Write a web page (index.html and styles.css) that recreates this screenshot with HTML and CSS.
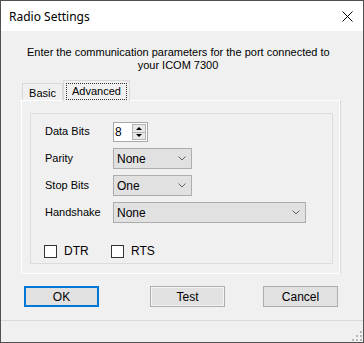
FILE: index.html
```html
<!DOCTYPE html>
<html lang="en">
<head>
    <meta charset="UTF-8">
    <title>Radio Settings</title>
    <link rel="stylesheet" href="styles.css">
</head>
<body>

    <div class="window">
        <div class="titlebar">
            <span class="title">Radio Settings</span>
            <svg class="close" width="11" height="11" viewBox="0 0 11 11">
                <path d="M0.5 0.5 L10.5 10.5 M10.5 0.5 L0.5 10.5" stroke="#000" stroke-width="1" fill="none"/>
            </svg>
        </div>

        <div class="intro">Enter the communication parameters for the port connected to<br>your ICOM 7300</div>

        <div class="tabs">
            <div class="tabstrip">
                <div class="tab">Basic</div>
                <div class="tab active"><span class="focus">Advanced</span></div>
            </div>
            <div class="tabpage">
                <div class="group">
                    <div class="row first">
                        <label class="field-label">Data Bits</label>
                        <div class="spinner">
                            <span class="spin-value">8</span>
                            <div class="spin-buttons">
                                <div class="spin-btn"><span class="arrow-up"></span></div>
                                <div class="spin-btn"><span class="arrow-down"></span></div>
                            </div>
                        </div>
                    </div>
                    <div class="row">
                        <label class="field-label">Parity</label>
                        <div class="combo">
                            <span>None</span>
                            <svg width="8" height="5" viewBox="0 0 8 5"><path d="M0.5 0.5 L4 4 L7.5 0.5" stroke="#606060" fill="none"/></svg>
                        </div>
                    </div>
                    <div class="row">
                        <label class="field-label">Stop Bits</label>
                        <div class="combo">
                            <span>One</span>
                            <svg width="8" height="5" viewBox="0 0 8 5"><path d="M0.5 0.5 L4 4 L7.5 0.5" stroke="#606060" fill="none"/></svg>
                        </div>
                    </div>
                    <div class="row">
                        <label class="field-label">Handshake</label>
                        <div class="combo wide">
                            <span>None</span>
                            <svg width="8" height="5" viewBox="0 0 8 5"><path d="M0.5 0.5 L4 4 L7.5 0.5" stroke="#606060" fill="none"/></svg>
                        </div>
                    </div>
                    <div class="checks">
                        <div class="check"><span class="box"></span>DTR</div>
                        <div class="check"><span class="box"></span>RTS</div>
                    </div>
                </div>
            </div>
        </div>

        <div class="buttons">
            <button class="btn default">OK</button>
            <button class="btn test">Test</button>
            <button class="btn cancel">Cancel</button>
        </div>

        <div class="footer">
            <svg class="grip" width="10" height="10" viewBox="0 0 10 10">
                <rect x="8" y="0" width="2" height="2" fill="#b8b8b8"/>
                <rect x="4" y="4" width="2" height="2" fill="#b8b8b8"/>
                <rect x="8" y="4" width="2" height="2" fill="#b8b8b8"/>
                <rect x="0" y="8" width="2" height="2" fill="#b8b8b8"/>
                <rect x="4" y="8" width="2" height="2" fill="#b8b8b8"/>
                <rect x="8" y="8" width="2" height="2" fill="#b8b8b8"/>
            </svg>
        </div>
    </div>

</body>
</html>
```

FILE: styles.css
```css
body {
    margin: 0;
    padding: 0;
    font-family: "Liberation Sans", Arial, sans-serif;
    font-size: 11px;
    color: #000;
    background-color: #ffffff;
}

.window {
    width: 364px;
    height: 343px;
    box-sizing: border-box;
    border: 1px solid #505050;
    background-color: #f0f0f0;
    display: flex;
    flex-direction: column;
}

.titlebar {
    height: 30px;
    flex-shrink: 0;
    background-color: #ffffff;
    display: flex;
    align-items: center;
    justify-content: space-between;
    padding: 0 10px 0 8px;
}

.title {
    font-family: "Noto Sans", "Liberation Sans", sans-serif;
    font-size: 12px;
    padding-top: 1px;
}

.intro {
    margin: 15px 0 0 26px;
    width: 302px;
    text-align: center;
    line-height: 13px;
    white-space: nowrap;
}

.tabs {
    margin: 8px 0 0 20px;
    width: 320px;
}

.tabstrip {
    display: flex;
    align-items: flex-end;
    height: 20px;
    padding-left: 1px;
}

.tab {
    box-sizing: border-box;
    width: 41px;
    height: 17px;
    border: 1px solid #d9d9d9;
    border-bottom: none;
    display: flex;
    align-items: center;
    justify-content: center;
    padding-top: 1px;
}

.tab.active {
    position: relative;
    z-index: 1;
    width: 67px;
    height: 21px;
    margin-bottom: -1px;
    background-color: #f0f0f0;
    align-items: flex-start;
    padding: 2px 0 0 0;
}

.focus {
    box-sizing: border-box;
    width: 61px;
    height: 17px;
    border: 1px dotted #333333;
    display: flex;
    justify-content: center;
    align-items: center;
    padding-bottom: 2px;
}

.tabpage {
    box-sizing: border-box;
    width: 319px;
    height: 174px;
    border: 1px solid #ffffff;
    box-shadow: 1px 0 0 #dadada;
    padding: 12px 0 0 8px;
}

.group {
    box-sizing: border-box;
    width: 303px;
    height: 151px;
    border: 1px solid #dcdcdc;
    padding: 8px 0 0 14px;
}

.row {
    display: flex;
    align-items: center;
    height: 21px;
    margin-top: 6px;
}

.row.first {
    height: 20px;
    margin-top: 0;
}

.field-label {
    width: 68px;
    padding-bottom: 2px;
}

.spinner {
    box-sizing: border-box;
    width: 35px;
    height: 20px;
    border: 1px solid #a8a8a8;
    background-color: #ffffff;
    display: flex;
    justify-content: space-between;
}

.spin-value {
    padding: 2px 0 0 1px;
    font-size: 12px;
}

.spin-buttons {
    display: flex;
    flex-direction: column;
    width: 14px;
    margin: 1px;
    border: 1px solid #b4b4b4;
    box-sizing: border-box;
    background-color: #e8e8e8;
}

.spin-btn {
    flex: 1;
    display: flex;
    align-items: center;
    justify-content: center;
}

.spin-btn + .spin-btn {
    border-top: 1px solid #b4b4b4;
}

.arrow-up {
    width: 0;
    height: 0;
    border-left: 3px solid transparent;
    border-right: 3px solid transparent;
    border-bottom: 3px solid #000;
}

.arrow-down {
    width: 0;
    height: 0;
    border-left: 3px solid transparent;
    border-right: 3px solid transparent;
    border-top: 3px solid #000;
}

.combo {
    box-sizing: border-box;
    width: 79px;
    height: 21px;
    border: 1px solid #adadad;
    background-color: #e1e1e1;
    display: flex;
    align-items: center;
    justify-content: space-between;
    padding: 0 5px 0 3px;
    font-size: 12px;
}

.combo.wide {
    width: 193px;
}

.checks {
    display: flex;
    margin-top: 21px;
    margin-left: -1px;
}

.check {
    display: flex;
    align-items: center;
    width: 67px;
    font-size: 12px;
}

.box {
    box-sizing: border-box;
    width: 13px;
    height: 13px;
    border: 1px solid #333333;
    background-color: #ffffff;
    margin-right: 7px;
}

.buttons {
    display: flex;
    margin: 12px 0 0 23px;
}

.btn {
    box-sizing: border-box;
    width: 75px;
    height: 21px;
    border: 1px solid #adadad;
    background-color: #e1e1e1;
    font-family: "Liberation Sans", Arial, sans-serif;
    font-size: 12px;
    color: #000;
    padding: 0;
}

.btn.default {
    border: 2px solid #0078d7;
}

.btn.test {
    margin-left: 51px;
    box-shadow: inset 0 0 0 1px #f4f4f4;
}

.btn.cancel {
    margin-left: 38px;
}

.footer {
    flex: 1;
    margin-top: 13px;
    border-top: 1px solid #dadada;
    display: flex;
    justify-content: flex-end;
    align-items: flex-end;
    padding: 0 1px 1px 0;
}
```
